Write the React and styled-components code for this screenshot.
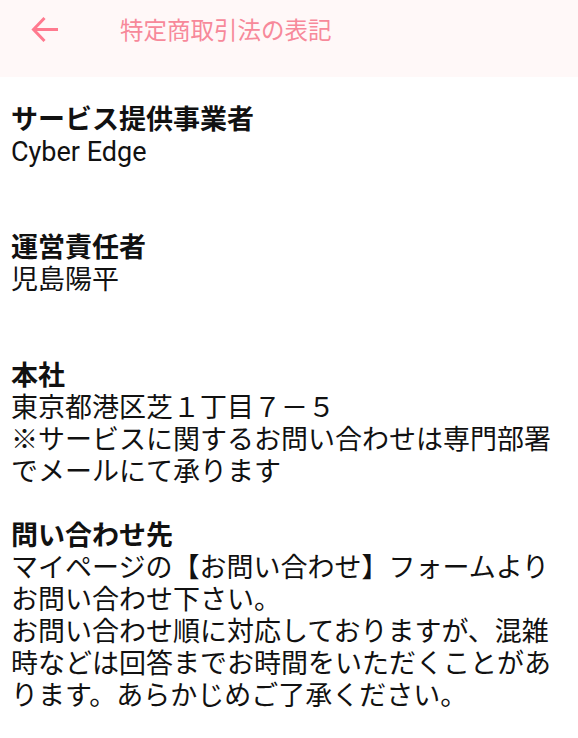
import React from "react";
import styled, { createGlobalStyle } from "styled-components";

const GlobalStyle = createGlobalStyle`
	html, body {
		margin: 0;
		padding: 0;
		background: #ffffff;
	}
	body {
		font-family: Roboto, "Noto Sans CJK JP", sans-serif;
		color: #111111;
	}
`;

const sections = [
	{ id: 1, title: "サービス提供事業者", lines: ["Cyber Edge"], space: 2 },
	{ id: 2, title: "運営責任者", lines: ["児島陽平"], space: 2 },
	{
		id: 3,
		title: "本社",
		lines: [
			"東京都港区芝１丁目７－５",
			"※サービスに関するお問い合わせは専門部署",
			"でメールにて承ります",
		],
		space: 1,
	},
	{
		id: 4,
		title: "問い合わせ先",
		lines: [
			"マイページの【お問い合わせ】フォームより",
			"お問い合わせ下さい。",
			"お問い合わせ順に対応しておりますが、混雑",
			"時などは回答までお時間をいただくことがあ",
			"ります。あらかじめご了承ください。",
		],
		space: 0,
	},
];

const BackIcon = () => (
	<svg width="28" height="27" viewBox="0 0 28 27" fill="none" stroke="currentColor" strokeWidth="3">
		<path d="M27 13.5H3.5" />
		<path d="M13.5 2L2.5 13.5L13.5 25" />
	</svg>
);

const Legal = () => {
	return (
		<Page>
			<GlobalStyle />
			<Header>
				<BackButton type="button">
					<BackIcon />
				</BackButton>
				<Title>特定商取引法の表記</Title>
			</Header>
			<Content>
				{sections.map((section) => {
					const { id, title, lines, space } = section;
					return (
						<Section key={id} $space={space}>
							<Heading>{title}</Heading>
							{lines.map((line, i) => (
								<Line key={i}>{line}</Line>
							))}
						</Section>
					);
				})}
			</Content>
		</Page>
	);
};

const Page = styled.div`
	width: 578px;
	min-height: 738px;
	background: #ffffff;
`;

const Header = styled.header`
	display: flex;
	align-items: flex-start;
	height: 77px;
	padding: 0 0 0 31px;
	box-sizing: border-box;
	background: #fff8f8;
`;

const BackButton = styled.button`
	display: flex;
	align-items: center;
	justify-content: flex-start;
	width: 28px;
	height: 58px;
	padding: 0;
	background: transparent;
	border: none;
	color: #ff7a8f;
	cursor: pointer;
`;

const Title = styled.h1`
	margin: 0 0 0 61px;
	height: 58px;
	display: flex;
	align-items: center;
	font-family: Roboto, "Noto Sans CJK JP", sans-serif;
	font-size: 23.5px;
	font-weight: 400;
	color: #f7899a;
`;

const Content = styled.main`
	padding: 27px 11px 0;
`;

const Section = styled.section`
	margin-bottom: ${(p) => p.$space * 32}px;
`;

const Heading = styled.h2`
	margin: 0;
	font-size: 27px;
	line-height: 32px;
	font-weight: 700;
	color: #111111;
`;

const Line = styled.p`
	margin: 0;
	font-size: 27px;
	line-height: 32px;
	font-weight: 400;
	color: #111111;
	white-space: nowrap;
`;

export default function App() {
	return <Legal />;
}
